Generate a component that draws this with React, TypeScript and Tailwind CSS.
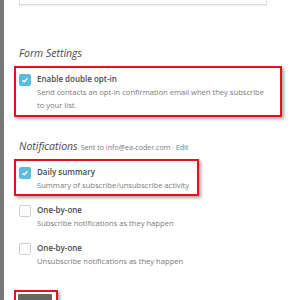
import React from "react";

function Check({ checked }: { checked?: boolean }) {
  return checked ? (
    <div className="w-[12px] h-[12px] shrink-0 rounded-[2px] bg-[#5bbcdc] flex items-center justify-center">
      <svg width="8" height="8" viewBox="0 0 8 8">
        <path d="M1.5 4.2 L3.2 5.8 L6.5 2.2" stroke="#fff" strokeWidth="1.3" fill="none" />
      </svg>
    </div>
  ) : (
    <div className="w-[12px] h-[12px] shrink-0 rounded-[2px] border border-[#cfcfcf] bg-white" />
  );
}

function Option({ checked, title, desc }: { checked?: boolean; title: string; desc: React.ReactNode }) {
  return (
    <div className="flex gap-[6px]">
      <div className="pt-[1px]">
        <Check checked={checked} />
      </div>
      <div>
        <div className="text-[8px] leading-[12px] font-semibold text-[#4a4a4a]">{title}</div>
        <div className="text-[7.6px] leading-[13px] text-[#7a7a7a] mt-[1px] whitespace-nowrap">{desc}</div>
      </div>
    </div>
  );
}

export default function App() {
  return (
    <div
      className="w-[300px] h-[300px] overflow-hidden bg-white flex"
      style={{ fontFamily: "'Open Sans', 'Liberation Sans', sans-serif" }}
    >
      <div className="w-[4px] h-full bg-[#777]" />
      <div className="flex-1 pl-[15px]">
        <div className="w-[248px] h-[5px] border-x border-b border-[#dcdcdc] shadow-[0_1px_1px_rgba(0,0,0,0.06)]" />

        <h3 className="mt-[40px] text-[10.5px] leading-[16px] italic text-[#4a4a4a]">Form Settings</h3>

        <div className="mt-[5px] -ml-[5px] w-[268px] h-[51px] border-2 border-[#e3121b] shadow-[2px_2px_3px_rgba(0,0,0,0.35)] pl-[3px] pt-[5px]">
          <Option
            checked
            title="Enable double opt-in"
            desc={
              <>
                Send contacts an opt-in confirmation email when they subscribe
                <br />
                to your list.
              </>
            }
          />
        </div>

        <div className="mt-[21px] flex items-baseline gap-[3px]">
          <h3 className="text-[10.5px] leading-[16px] italic text-[#4a4a4a]">Notifications</h3>
          <span className="text-[7.1px] text-[#7a7a7a]">
            Sent to info@ea-coder.com · <span className="text-[#3f91b5]">Edit</span>
          </span>
        </div>

        <div className="mt-[5px] -ml-[5px] w-[185px] h-[37px] border-2 border-[#e3121b] shadow-[2px_2px_3px_rgba(0,0,0,0.35)] pl-[3px] pt-[5px]">
          <Option checked title="Daily summary" desc="Summary of subscribe/unsubscribe activity" />
        </div>

        <div className="mt-[8px]">
          <Option title="One-by-one" desc="Subscribe notifications as they happen" />
        </div>
        <div className="mt-[12px]">
          <Option title="One-by-one" desc="Unsubscribe notifications as they happen" />
        </div>

        <div className="mt-[22px] -ml-[5px] w-[44px] h-[20px] border-2 border-[#e3121b] shadow-[2px_2px_3px_rgba(0,0,0,0.35)] pl-[2px] pt-[2px]">
          <div className="w-[34px] h-[16px] bg-[#666] rounded-[1px]" />
        </div>
      </div>
    </div>
  );
}
